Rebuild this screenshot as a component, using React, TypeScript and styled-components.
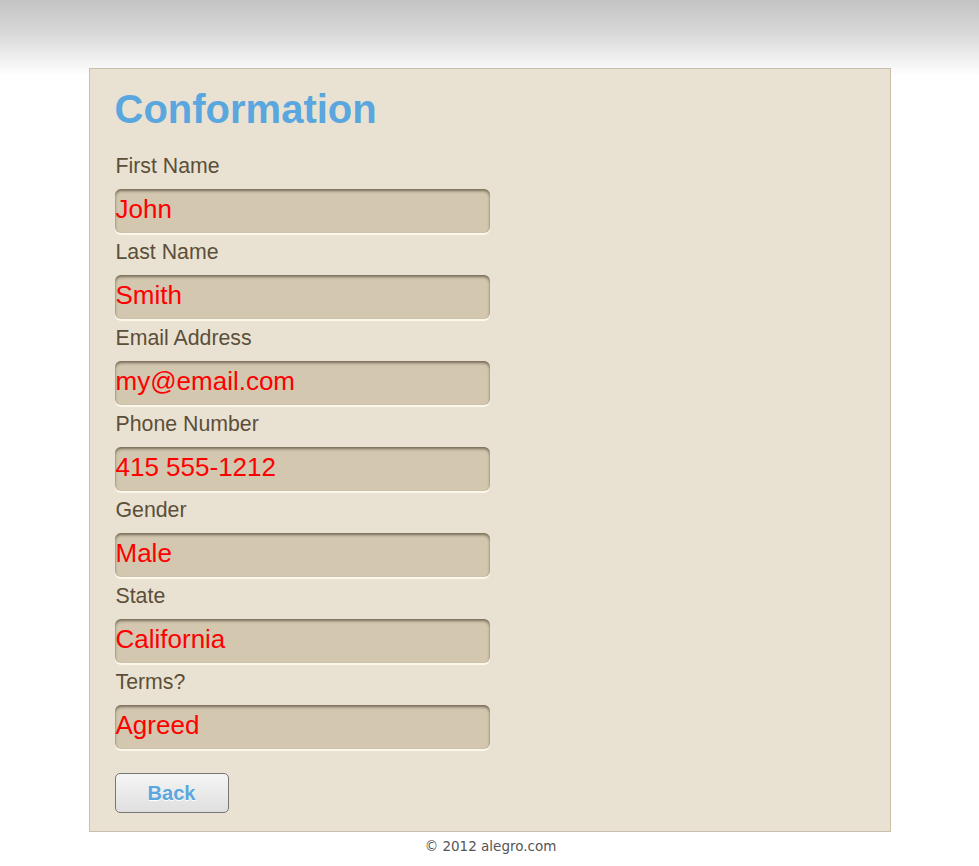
import React from "react";
import styled, { createGlobalStyle } from "styled-components";

const Global = createGlobalStyle`
  html, body {
    margin: 0;
    padding: 0;
  }
  body {
    background: #ffffff linear-gradient(to bottom, #c3c3c3 0px, #d6d6d6 30px, #ffffff 76px) no-repeat;
    background-size: 100% 80px;
    font-family: "Liberation Sans", Arial, sans-serif;
    min-height: 866px;
  }
`;

const Page = styled.div`
  padding-top: 68px;
  display: flex;
  flex-direction: column;
  align-items: center;
`;

const Panel = styled.main`
  width: 750px;
  border: 1px solid #c9bfaa;
  background: #e9e2d2;
  padding: 17px 25px 18px 25px;
  display: flex;
  flex-direction: column;
  align-items: flex-start;
`;

const Title = styled.h1`
  margin: 0 0 22px 0;
  font-size: 40px;
  line-height: 46px;
  font-weight: bold;
  color: #5aa7df;
`;

const Field = styled.div`
  display: flex;
  flex-direction: column;
  margin-bottom: 5px;
`;

const Label = styled.div`
  font-size: 21.3px;
  line-height: 24px;
  color: #5c4f39;
  padding-left: 1px;
  margin-bottom: 11px;
`;

const Value = styled.div`
  width: 375px;
  height: 44px;
  box-sizing: border-box;
  border-radius: 6px;
  background: #d3c7b0;
  box-shadow: inset 0 2px 3px rgba(40, 30, 10, 0.55), 0 2px 0 #fbf7ea;
  color: #ff0000;
  font-size: 26px;
  line-height: 40px;
  padding: 0 0 4px 1px;
  margin-bottom: 2px;
  white-space: nowrap;
`;

const BackButton = styled.button`
  margin-top: 17px;
  width: 114px;
  height: 40px;
  box-sizing: border-box;
  border: 1px solid #767676;
  border-radius: 5px;
  background: linear-gradient(to bottom, #f5f5f5 0%, #dfdfdf 100%);
  color: #5aa7df;
  font-family: "Liberation Sans", Arial, sans-serif;
  font-weight: bold;
  font-size: 20px;
  line-height: 38px;
  padding: 0;
  text-shadow: 0 1px 0 #ffffff;
  cursor: pointer;
`;

const Footer = styled.footer`
  margin-top: 5px;
  font-family: Verdana, "DejaVu Sans", sans-serif;
  font-size: 13.5px;
  line-height: 18px;
  color: #555555;
  padding-left: 2px;
`;

const fields: [string, string][] = [
  ["First Name", "John"],
  ["Last Name", "Smith"],
  ["Email Address", "my@email.com"],
  ["Phone Number", "415 555-1212"],
  ["Gender", "Male"],
  ["State", "California"],
  ["Terms?", "Agreed"],
];

export default function App() {
  return (
    <>
      <Global />
      <Page>
        <Panel>
          <Title>Conformation</Title>
          {fields.map(([label, value]) => (
            <Field key={label}>
              <Label>{label}</Label>
              <Value>{value}</Value>
            </Field>
          ))}
          <BackButton type="button">Back</BackButton>
        </Panel>
        <Footer>© 2012 alegro.com</Footer>
      </Page>
    </>
  );
}
